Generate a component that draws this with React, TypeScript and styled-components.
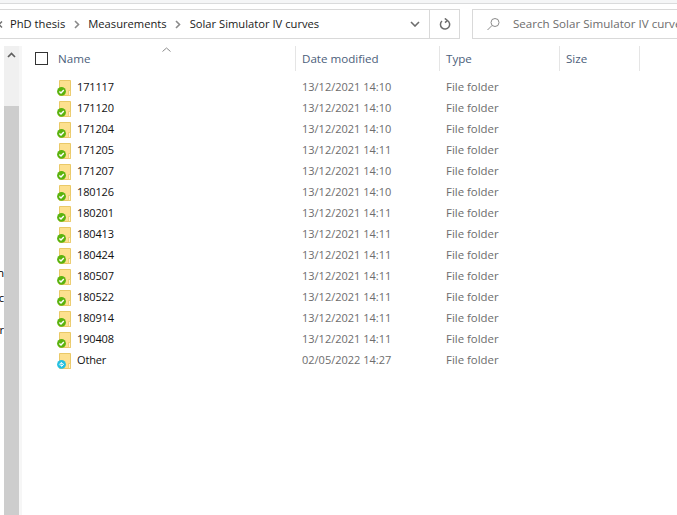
import React from "react";
import styled, { createGlobalStyle } from "styled-components";

const GlobalStyle = createGlobalStyle`
    html, body {
        margin: 0;
        padding: 0;
        background: #ffffff;
    }
    body {
        font-family: "Open Sans", "Noto Sans", sans-serif;
        font-size: 11.2px;
        overflow: hidden;
    }
`;

const FOLDERS = [
    { name: "171117", date: "13/12/2021 14:10" },
    { name: "171120", date: "13/12/2021 14:10" },
    { name: "171204", date: "13/12/2021 14:10" },
    { name: "171205", date: "13/12/2021 14:11" },
    { name: "171207", date: "13/12/2021 14:10" },
    { name: "180126", date: "13/12/2021 14:10" },
    { name: "180201", date: "13/12/2021 14:11" },
    { name: "180413", date: "13/12/2021 14:11" },
    { name: "180424", date: "13/12/2021 14:11" },
    { name: "180507", date: "13/12/2021 14:11" },
    { name: "180522", date: "13/12/2021 14:11" },
    { name: "180914", date: "13/12/2021 14:11" },
    { name: "190408", date: "13/12/2021 14:11" },
    { name: "Other", date: "02/05/2022 14:27", syncing: true },
];

const Chevron: React.FC = () => (
    <CrumbSeparator width="6" height="9" viewBox="0 0 6 9">
        <path d="M1 1l3.5 3.5L1 8" fill="none" stroke="#8a8a8a" strokeWidth="1.6" />
    </CrumbSeparator>
);

const FolderIcon: React.FC<{ syncing?: boolean }> = ({ syncing }) => (
    <svg width="18" height="18" viewBox="0 0 18 18">
        <path d="M2.5 1.5h11v15h-11z" fill="#fde08f" stroke="#eac968" />
        <path d="M11.5 11.5h2v5h-2z" fill="#fff3c9" stroke="#eac968" strokeWidth="0.8" />
        <circle cx="4.5" cy="12.4" r="4.4" fill={syncing ? "#22bfe0" : "#5bb30e"} />
        {syncing ? (
            <path
                d="M2.2 12.6l2.2-2.2v1.3h1.8M6.8 12.2l-2.2 2.2v-1.3H2.8"
                stroke="#ffffff"
                strokeWidth="1"
                fill="none"
            />
        ) : (
            <path d="M2.4 12.4l1.6 1.6 2.8-3" stroke="#ffffff" strokeWidth="1.4" fill="none" />
        )}
    </svg>
);

export default function App() {
    return (
        <Window>
            <GlobalStyle />
            <RibbonEdge />
            <AddressRow>
                <AddressBar>
                    <LeftArrow width="10" height="7" viewBox="0 0 10 7">
                        <path d="M2 0.5l-3 3 3 3" fill="none" stroke="#6d6d6d" strokeWidth="1.4" />
                    </LeftArrow>
                    <Crumb>PhD thesis</Crumb>
                    <Chevron />
                    <Crumb>Measurements</Crumb>
                    <Chevron />
                    <Crumb>Solar Simulator IV curves</Crumb>
                    <Dropdown width="10" height="6" viewBox="0 0 10 6">
                        <path d="M1 1l4 4 4-4" fill="none" stroke="#6d6d6d" strokeWidth="1.6" />
                    </Dropdown>
                    <RefreshButton>
                        <svg width="12" height="13" viewBox="0 0 12 13">
                            <path
                                d="M8.2 2.4A4.6 4.6 0 1 1 3 3M5.8 0.4L8.4 2.5 6 4.6"
                                fill="none"
                                stroke="#6d6d6d"
                                strokeWidth="1.5"
                            />
                        </svg>
                    </RefreshButton>
                </AddressBar>
                <SearchBox>
                    <SearchIcon width="13" height="14" viewBox="0 0 13 14">
                        <circle cx="8" cy="5.5" r="4" fill="none" stroke="#8a8a8a" />
                        <path d="M5 8.5L0.5 13" stroke="#8a8a8a" />
                    </SearchIcon>
                    <SearchText>Search Solar Simulator IV curves</SearchText>
                </SearchBox>
            </AddressRow>
            <Body>
                <NavClip>
                    <NavLetter $top={219}>h</NavLetter>
                    <NavLetter $top={244}>c</NavLetter>
                    <NavLetter $top={276}>r</NavLetter>
                </NavClip>
                <ScrollBar>
                    <ScrollButton>
                        <svg width="9" height="6" viewBox="0 0 9 6">
                            <path d="M1 5l3.5-3.5L8 5" fill="none" stroke="#5f5f5f" strokeWidth="1.7" />
                        </svg>
                    </ScrollButton>
                    <ScrollThumb />
                </ScrollBar>
                <PaneDivider />
                <List>
                    <SortCaret width="9" height="5" viewBox="0 0 9 5">
                        <path d="M0.5 4.5l4-3.5 4 3.5" fill="none" stroke="#8a8a8a" />
                    </SortCaret>
                    <HeaderRow>
                        <HeaderCell $first>
                            <SelectBox />
                            Name
                        </HeaderCell>
                        <HeaderCell>Date modified</HeaderCell>
                        <HeaderCell>Type</HeaderCell>
                        <HeaderCell>Size</HeaderCell>
                    </HeaderRow>
                    <Rows>
                        {FOLDERS.map(f => (
                            <Row key={f.name}>
                                <NameCell>
                                    <FolderIcon syncing={f.syncing} />
                                    <FolderName>{f.name}</FolderName>
                                </NameCell>
                                <DateCell>{f.date}</DateCell>
                                <MutedCell>File folder</MutedCell>
                                <span />
                            </Row>
                        ))}
                    </Rows>
                </List>
            </Body>
        </Window>
    );
}

const Window = styled.div`
    width: 677px;
    height: 515px;
    display: flex;
    flex-direction: column;
    overflow: hidden;
    color: #000000;
`;

const RibbonEdge = styled.div`
    height: 3px;
    background: #f5f6f7;
    border-bottom: 1px solid #dadbdc;
    flex: none;
`;

const AddressRow = styled.div`
    display: flex;
    gap: 12px;
    height: 30px;
    margin-top: 5px;
    flex: none;
`;

const AddressBar = styled.div`
    width: 460px;
    flex: none;
    display: flex;
    align-items: center;
    border: 1px solid #d9d9d9;
    border-left: none;
    box-sizing: border-box;
`;

const LeftArrow = styled.svg`
    flex: none;
`;

const Crumb = styled.span`
    color: #1a1a1a;
    white-space: nowrap;
    padding-bottom: 2px;
`;

const CrumbSeparator = styled.svg`
    margin: 0 8.5px;
    flex: none;
`;

const Dropdown = styled.svg`
    margin-left: auto;
    margin-right: 9px;
`;

const RefreshButton = styled.div`
    width: 29px;
    height: 100%;
    display: flex;
    align-items: center;
    justify-content: center;
    border-left: 1px solid #d9d9d9;
`;

const SearchBox = styled.div`
    flex: 1;
    min-width: 0;
    display: flex;
    align-items: center;
    gap: 13px;
    padding-left: 14px;
    border: 1px solid #d9d9d9;
    border-right: none;
    white-space: nowrap;
    overflow: hidden;
`;

const SearchIcon = styled.svg`
    flex: none;
`;

const SearchText = styled.span`
    color: #6d6d6d;
    font-size: 11.6px;
    padding-bottom: 2px;
`;

const Body = styled.div`
    flex: 1;
    min-height: 0;
    display: flex;
    padding-top: 7px;
`;

const NavClip = styled.div`
    width: 4px;
    flex: none;
    position: relative;
    overflow: hidden;
`;

const NavLetter = styled.span<{ $top: number }>`
    position: absolute;
    right: 0;
    top: ${props => props.$top}px;
`;

const ScrollBar = styled.div`
    width: 15px;
    flex: none;
    background: #f0f0f0;
    display: flex;
    flex-direction: column;
`;

const ScrollButton = styled.div`
    height: 17px;
    display: flex;
    align-items: center;
    justify-content: center;
    margin-bottom: 43px;
`;

const ScrollThumb = styled.div`
    flex: 1;
    background: #cdcdcd;
`;

const PaneDivider = styled.div`
    width: 3px;
    margin-right: 1px;
    background: #f6f6f6;
    flex: none;
`;

const List = styled.div`
    flex: 1;
    min-width: 0;
    position: relative;
`;

const SortCaret = styled.svg`
    position: absolute;
    left: 139px;
    top: 1px;
`;

const HeaderRow = styled.div`
    display: grid;
    grid-template-columns: 273px 144px 120px 80px;
    height: 25px;
    margin-bottom: 6px;
`;

const HeaderCell = styled.div<{ $first?: boolean }>`
    display: flex;
    align-items: center;
    gap: 10px;
    padding-left: ${props => (props.$first ? "12px" : "6px")};
    border-right: 1px solid #e5e5e5;
    color: #4c607a;
    font-size: 11.6px;
`;

const SelectBox = styled.span`
    width: 11px;
    height: 11px;
    border: 1px solid #333333;
    flex: none;
`;

const Rows = styled.div`
    display: flex;
    flex-direction: column;
`;

const Row = styled.div`
    display: grid;
    grid-template-columns: 273px 144px 120px 80px;
    height: 21px;
    align-items: center;
`;

const NameCell = styled.div`
    display: flex;
    align-items: center;
    gap: 2px;
    padding-left: 34px;
    color: #111111;
    font-size: 11px;
    letter-spacing: -0.15px;
`;

const FolderName = styled.span`
    padding-bottom: 2px;
`;

const MutedCell = styled.div`
    padding-left: 6px;
    padding-bottom: 2px;
    color: #6d6d6d;
    font-size: 11.4px;
`;

const DateCell = styled(MutedCell)`
    font-size: 11px;
`;
